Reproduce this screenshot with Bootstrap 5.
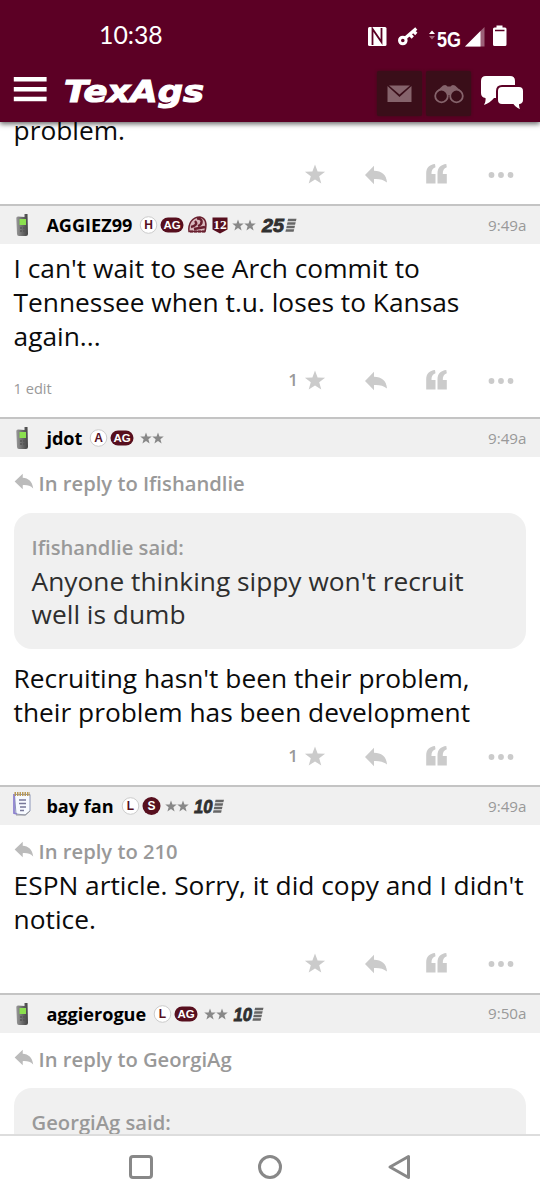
<!DOCTYPE html>
<html lang="en">
<head>
<meta charset="utf-8">
<meta name="viewport" content="width=device-width, initial-scale=1">
<title>TexAgs</title>
<link rel="stylesheet" href="https://cdn.jsdelivr.net/npm/bootstrap@5.3.0/dist/css/bootstrap.min.css">
<style>
  body { font-family: "Open Sans", sans-serif; color: #0b0b0b; height: 1200px; }
  svg { display: block; flex: none; }
  svg text { white-space: pre; }
  .app { height: 1200px; background: #fff; }
  .top { height: 122px; background: #5c0025; color: #fff; box-shadow: 0 2px 5px rgba(0,0,0,.6); z-index: 2; }
  .status { height: 71px; padding: 0 33px 0 99px; }
  .clock { font: 400 24.8px/1 Lato, sans-serif; }
  .brandbar { height: 45px; padding: 0 16px 0 13px; }
  .tile { width: 45px; height: 45px; background: #3a0e19; border-radius: 2px; box-shadow: 0 0 3px #3a0e19; }
  .feed { line-height: 33.6px; font-size: 26.3px; }
  .bar { height: 40px; background: #f0f0f0; border-top: 2px solid #c4c4c4; padding: 0 13.5px 0 14px; }
  .face { width: 32.4px; }
  .user { font-size: 18.1px; font-weight: 700; line-height: 36px; margin-right: 7px; color: #000; }
  .time { font-size: 15.2px; color: #999; }
  .post { padding: 8px 13.6px 0; }
  .post.reply { padding-top: 10px; }
  .acts { height: 57px; padding: 0 12.4px 4px 0; color: #cbcbcb; }
  .n1 { font-size: 17px; font-weight: 600; color: #999; margin-right: 6px; }
  .edit { font-size: 14.6px; color: #999; line-height: 20px; }
  .re { font-size: 20.2px; font-weight: 600; color: #999; }
  .re svg { margin: 0 5px 5px 0; }
  .said { font-size: 20.2px; font-weight: 600; color: #999; }
  .quote { background: #f0f0f0; border-radius: 18px; padding: 18px; color: #2e2e2e; height: 136px; margin: 12px 0 13px; }
  .soft { height: 66px; background: #fff; border-top: 2px solid #ddd; z-index: 2; }
</style>
</head>
<body>
<svg width="0" height="0" class="position-absolute">
  <defs>
    <linearGradient id="metal" x2="1"><stop stop-color="#999"/><stop offset=".5" stop-color="#6c6c6c"/><stop offset="1" stop-color="#444"/></linearGradient>
    <path id="st" d="M0-10.6 2.6-3.5 10.1-3.3 4.2 1.3 6.3 8.6 0 4.4-6.3 8.6-4.2 1.3-10.1-3.3-2.6-3.5Z"/>
    <symbol id="arrow" viewBox="0 0 22 20"><path d="M0 10 9.500 1V5.700C16 6 20.800 10 21.800 18.300 18.500 15 15 14 9.500 14.300V19Z" fill="#bbb"/></symbol>
    <symbol id="acts" viewBox="0 0 210 24">
      <g fill="currentColor">
        <use href="#st" x="11" y="13"/>
        <path d="M61 13 70 3.700V8.800C77.500 9 82.500 12.500 83 20.500 79.500 17.500 75 16.700 70 17V22.200Z"/>
        <path id="q" d="M122.200 21.500V11.500C122.200 5.500 125.500 2.700 131 2L131.500 5.200C128.500 6.200 127.300 8.500 127.500 12H131.500V21.500Z"/>
        <use href="#q" x="11.300"/>
        <circle cx="187.500" cy="13" r="2.900"/><circle cx="197" cy="13" r="2.900"/><circle cx="206.500" cy="13" r="2.900"/>
      </g>
    </symbol>
    <symbol id="phone" viewBox="0 0 14 24"><path d="M9.500 4V1H12.500L13 21Q13 23 11 23H4Q2 23 2 21L1.300 5Q1.300 3.500 3 3.500Z" fill="url(#metal)"/><path d="M4.500 6H11V12H4.500Z" fill="#8be04e"/><path d="M5 15H11M5 18H11" stroke="#555" stroke-width="1.500" stroke-dasharray="2 1"/></symbol>
    <symbol id="pad" viewBox="0 0 20 26"><path d="M1.500 3.500H17V20L12.500 24 3 23Z" fill="#f7faff" stroke="#8c96b8"/><path d="M1 3V22L4 23" fill="none" stroke="#8d82d0" stroke-width="1.800"/><path d="M3 24H12L17 20" stroke="#999" fill="none"/><path d="M1.500 3H17" stroke="#b99a57" stroke-width="4" stroke-dasharray="1.500 1"/><path d="M6 9H13M6 12.500H13M7 16H13M7 19.500H11" stroke="#779" stroke-width="1.300"/></symbol>
    <symbol id="ag" viewBox="0 0 24 20"><rect x=".5" y="2.500" width="23" height="15" rx="7.500" fill="#570f1e"/><text x="12" y="14.200" text-anchor="middle" font-family="Liberation Sans" font-weight="700" font-size="11.500" fill="#fff">AG</text></symbol>
    <symbol id="stars" viewBox="0 0 24 20"><g fill="#888"><use href="#st" transform="translate(6 10.500) scale(.57)"/><use href="#st" transform="translate(18 10.500) scale(.57)"/></g></symbol>
    <path id="speed" d="M2.600 3.700H11L10.400 6.200H2ZM2 7.200H10.200L9.600 9.700H1.400ZM1.300 10.700H9.500L8.900 13.200H.7ZM.5 14.200H8.700L8.100 16.700H-.1Z" fill="#666"/>
    <symbol id="ten" viewBox="0 0 34 20"><text x="1.500" y="16.500" font-family="Liberation Sans" font-weight="700" font-style="italic" font-size="18" stroke="#303030" stroke-width=".8" fill="#303030" textLength="18.500" lengthAdjust="spacingAndGlyphs">10</text><use href="#speed" x="20.500"/></symbol>
  </defs>
</svg>

<div class="app d-flex flex-column overflow-hidden">
  <header class="top flex-shrink-0 position-relative">
    <div class="status d-flex align-items-center justify-content-between">
      <span class="clock">10:38</span>
      <svg width="140" height="24" viewBox="0 0 140 24" overflow="visible">
        <rect x="1" y="3" width="18.500" height="19" rx="1.500" fill="#fff"/><path d="M5.500 21V5L14.500 18V4" stroke="#5c0025" stroke-width="1.800" fill="none"/>
        <g stroke="#fff" fill="none"><circle cx="35.800" cy="16.500" r="3.300" stroke-width="3"/><path d="M38.300 14 49.300 4.500M42.800 10.500 45.800 13.500M46.300 7 49.300 10" stroke-width="3.200"/></g>
        <path d="M62 10 65 6.500 68 10Z" fill="#fff"/><path d="M62 12H68L65 15.500Z" fill="#a46a80"/>
        <text x="70" y="22.500" font-family="Liberation Sans" font-weight="700" font-size="21.500" fill="#fff" textLength="24" lengthAdjust="spacingAndGlyphs">5G</text>
        <path d="M98 22.500 117.500 3V22.500Z" fill="#9c6078"/><path d="M98 22.500 113.500 7V22.500Z" fill="#fff"/>
        <path d="M126 5Q126 3.500 127.500 3.500H129.500V1.500H135.500V3.500H138Q139.500 3.500 139.500 5V20.500Q139.500 22 138 22H127.500Q126 22 126 20.500Z" fill="#fff"/><path d="M128 6.500H137.500" stroke="#5c0025" stroke-width="1.500"/>
      </svg>
    </div>
    <div class="brandbar d-flex align-items-center">
      <svg width="195" height="45" viewBox="0 0 195 45">
        <path d="M.8 8.300H33.600M.8 18.300H33.600M.8 28H33.600" stroke="#fff" stroke-width="4.400"/>
        <text x="51" y="31.300" font-family="DejaVu Sans" font-weight="700" font-style="italic" font-size="30" fill="#fff" stroke="#fff" stroke-width="1.100" textLength="140" lengthAdjust="spacingAndGlyphs">TexAgs</text>
      </svg>
      <div class="d-flex align-items-center ms-auto">
        <div class="tile d-flex align-items-center justify-content-center me-1"><svg width="25" height="18" viewBox="0 0 25 18"><path d="M.5 1V17H24.500V1L12.500 12Z" fill="#85636b"/><path d="M2 .5H23L12.500 9.500Z" fill="#85636b"/></svg></div>
        <div class="tile d-flex align-items-center justify-content-center"><svg width="30" height="20" viewBox="0 0 30 20"><path d="M3 7 9 1.500Q12 0 13.500 2.500H16.500Q18 0 21 1.500L27 7 22 8 16.500 11H13.500L8 8Z" fill="#85636b"/><g fill="#3a0e19" stroke="#85636b" stroke-width="1.800"><circle cx="7.500" cy="12" r="6.300"/><circle cx="22.500" cy="12" r="6.300"/></g></svg></div>
        <svg class="ms-2" width="45" height="37" viewBox="0 0 45 37"><path d="M7 1H31Q36 1 36 6V18Q36 23 31 23H15Q11 28 5 30 7 27 6.500 23 2 22.500 2 18V6Q2 1 7 1Z" fill="#fff"/><path d="M23 11H40Q45 11 45 16V25Q45 29 41 30 41 33 43 36 37 34 34 30H23Q18 30 18 25V16Q18 11 23 11Z" fill="#fff" stroke="#5c0025" stroke-width="2"/></svg>
      </div>
    </div>
  </header>

  <main class="feed flex-grow-1 overflow-hidden">
    <article class="d-flex flex-column justify-content-end" style="height:82.400px">
      <div class="post pt-0"><div>problem.</div>
        <div class="acts d-flex align-items-center justify-content-end"><svg width="210" height="24"><use href="#acts"/></svg></div>
      </div>
    </article>

    <article style="height:213px">
      <div class="bar d-flex align-items-center">
        <div class="face"><svg width="16" height="24"><use href="#phone"/></svg></div>
        <span class="user">AGGIEZ99</span>
        <svg width="160" height="20" viewBox="0 0 160 20">
          <circle cx="9.500" cy="10" r="8.300" fill="#fff" stroke="#ccc"/><text x="9.500" y="14.400" text-anchor="middle" font-family="Liberation Sans" font-weight="700" font-size="12" fill="#570f1e">H</text>
          <use href="#ag" x="21" width="24" height="20"/>
          <g fill="none" stroke="#681f2e"><path d="M50 16.500C49 9 53 2 61 2 67 3 68 9 66 16.500Z" fill="#d9b9bd" stroke-width="1.500"/><path d="M52 12C56 11 59 9 56 6M58 3.500C64 3 64 9 59 11M55 14 66 12" stroke-width="2.400"/><path d="M51 16.500H67" stroke-width="2" stroke-dasharray="3 1"/></g>
          <path d="M73.500 2.500H88.500V14.500L81 18.500 73.500 14.500Z" fill="#570f1e"/><text x="81" y="14" text-anchor="middle" font-family="Liberation Serif" font-weight="700" font-size="13.500" fill="#fff">12</text>
          <use href="#stars" x="93" width="24" height="20"/>
          <text x="123" y="16.500" font-family="Liberation Sans" font-weight="700" font-style="italic" font-size="18" stroke="#303030" stroke-width=".8" fill="#303030" textLength="22" lengthAdjust="spacingAndGlyphs">25</text>
          <use href="#speed" x="146.500"/>
        </svg>
        <span class="time ms-auto">9:49a</span>
      </div>
      <div class="post">I can't wait to see Arch commit to Tennessee when t.u. loses to Kansas again...
        <div class="d-flex justify-content-between"><span class="edit" style="padding-top:25px">1 edit</span>
        <div class="acts d-flex align-items-center"><span class="n1">1</span><svg width="210" height="24"><use href="#acts"/></svg></div></div>
      </div>
    </article>

    <article style="height:368px">
      <div class="bar d-flex align-items-center">
        <div class="face"><svg width="16" height="24"><use href="#phone"/></svg></div>
        <span class="user">jdot</span>
        <svg width="90" height="20" viewBox="0 0 90 20"><circle cx="9.500" cy="10" r="8.300" fill="#fff" stroke="#ccc"/><text x="9.500" y="14.400" text-anchor="middle" font-family="Liberation Sans" font-weight="700" font-size="12" fill="#570f1e">A</text><use href="#ag" x="21" width="24" height="20"/><use href="#stars" x="51" width="24" height="20"/></svg>
        <span class="time ms-auto">9:49a</span>
      </div>
      <div class="post reply">
        <div class="re d-flex align-items-center"><svg width="20" height="17"><use href="#arrow"/></svg>In reply to Ifishandlie</div>
        <div class="quote"><div class="said">Ifishandlie said:</div>Anyone thinking sippy won't recruit well is dumb</div>
        Recruiting hasn't been their problem, their problem has been development
        <div class="acts d-flex align-items-center justify-content-end"><span class="n1">1</span><svg width="210" height="24"><use href="#acts"/></svg></div>
      </div>
    </article>

    <article style="height:207.400px">
      <div class="bar d-flex align-items-center">
        <div class="face"><svg width="20" height="26" style="margin:-4px 0 0 -1px"><use href="#pad"/></svg></div>
        <span class="user">bay fan</span>
        <svg width="110" height="20" viewBox="0 0 110 20"><circle cx="9.500" cy="10" r="8.300" fill="#fff" stroke="#ccc"/><text x="9.500" y="14.400" text-anchor="middle" font-family="Liberation Sans" font-weight="700" font-size="12" fill="#570f1e">L</text><circle cx="30.500" cy="10" r="9" fill="#570f1e"/><text x="30.500" y="14.400" text-anchor="middle" font-family="Liberation Sans" font-weight="700" font-size="12" fill="#fff">S</text><use href="#stars" x="44" width="24" height="20"/><use href="#ten" x="71.500" width="34" height="20"/></svg>
        <span class="time ms-auto">9:49a</span>
      </div>
      <div class="post reply">
        <div class="re d-flex align-items-center"><svg width="20" height="17"><use href="#arrow"/></svg>In reply to 210</div>
        <div class="text-nowrap">ESPN article. Sorry, it did copy and I didn't<br>notice.</div>
        <div class="acts d-flex align-items-center justify-content-end"><svg width="210" height="24"><use href="#acts"/></svg></div>
      </div>
    </article>

    <article>
      <div class="bar d-flex align-items-center">
        <div class="face"><svg width="16" height="24"><use href="#phone"/></svg></div>
        <span class="user">aggierogue</span>
        <svg width="115" height="20" viewBox="0 0 115 20"><circle cx="9.500" cy="10" r="8.300" fill="#fff" stroke="#ccc"/><text x="9.500" y="14.400" text-anchor="middle" font-family="Liberation Sans" font-weight="700" font-size="12" fill="#570f1e">L</text><use href="#ag" x="21" width="24" height="20"/><use href="#stars" x="51" width="24" height="20"/><use href="#ten" x="79" width="34" height="20"/></svg>
        <span class="time ms-auto">9:50a</span>
      </div>
      <div class="post reply">
        <div class="re d-flex align-items-center"><svg width="20" height="17"><use href="#arrow"/></svg>In reply to GeorgiAg</div>
        <div class="quote"><div class="said">GeorgiAg said:</div></div>
      </div>
    </article>
  </main>

  <nav class="soft flex-shrink-0 d-flex justify-content-center">
    <svg width="300" height="64" viewBox="0 0 300 64" fill="none" stroke="#888" stroke-width="3"><rect x="10.500" y="20.500" width="21" height="21" rx="2.500"/><circle cx="150" cy="31" r="10.500"/><path d="M288.500 20.500V41.500L270 31Z" stroke-linejoin="round"/></svg>
  </nav>
</div>
<script src="https://cdn.jsdelivr.net/npm/bootstrap@5.3.0/dist/js/bootstrap.bundle.min.js"></script>
</body>
</html>
